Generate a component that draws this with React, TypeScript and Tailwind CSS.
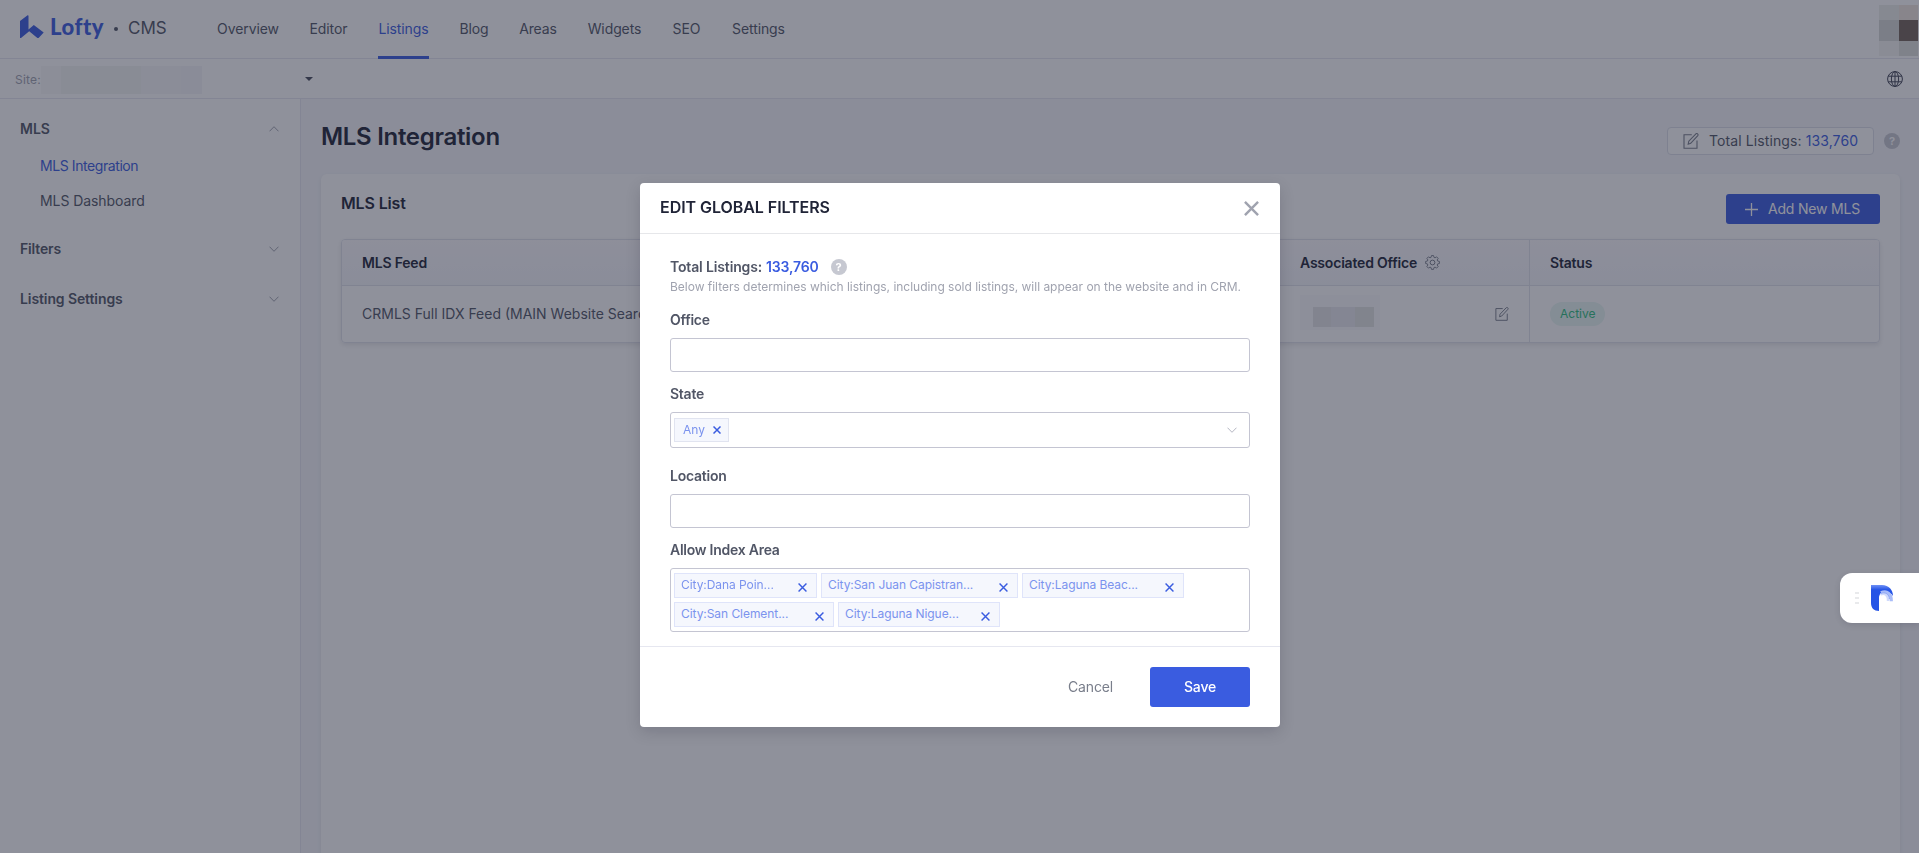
import React from "react";

const navItems = [
  { label: "Overview", width: "w-[62px]" },
  { label: "Editor", width: "w-[39px]" },
  { label: "Listings", width: "w-[51px]", active: true },
  { label: "Blog", width: "w-[30px]" },
  { label: "Areas", width: "w-[38px]" },
  { label: "Widgets", width: "w-[55px]" },
  { label: "SEO", width: "w-[29px]" },
  { label: "Settings", width: "w-[55px]" },
];

const areaTags = [
  { label: "City:Dana Poin...", width: "w-[143px]" },
  { label: "City:San Juan Capistran...", width: "w-[197px]" },
  { label: "City:Laguna Beac...", width: "w-[162px]" },
  { label: "City:San Clement...", width: "w-[160px]" },
  { label: "City:Laguna Nigue...", width: "w-[162px]" },
];

const LoftyLogo = () => (
  <svg width="24" height="24" viewBox="0 0 24 24" fill="#3a5ce0">
    <path d="M0 6 7.6.3Q8.500 0 8.500 1v13.600l5.300-4.500 9.900 7.400L18.600 23h-1.200L9.200 16.300 1 22.900H0Z" />
  </svg>
);

const Chevron = ({ up = false, color = "#a0a3af" }) => (
  <svg width="10" height="6" viewBox="0 0 10 6" fill="none" stroke={color} strokeWidth="1">
    <path d={up ? "M.5 5.3 5 .7l4.5 4.6" : "M.5.7 5 5.3 9.5.7"} />
  </svg>
);

const EditIcon = ({ size = 16 }) => (
  <svg width={size} height={size} viewBox="0 0 16 16" fill="none" stroke="#797e8b" strokeWidth="1.1">
    <path d="M8.8 1.8H1v13.4h13V7.6" />
    <path d="m5.2 11.2.6-3L12.9.8q.9-.6 1.7.1.8.8.2 1.7l-7.1 7.7Z" />
  </svg>
);

const GlobeIcon = () => (
  <svg width="16" height="16" viewBox="0 0 16 16" fill="none" stroke="#3f4354" strokeWidth="1">
    <circle cx="8" cy="8" r="7.4" />
    <ellipse cx="8" cy="8" rx="3.6" ry="7.4" />
    <path d="M8 .6v14.8M1.2 5.2h13.6M1.2 10.8h13.6" />
  </svg>
);

const GearIcon = () => (
  <svg width="15" height="15" viewBox="0 0 24 24" fill="none" stroke="#797e8b" strokeWidth="1.6" strokeLinejoin="round">
    <path d="M10.2 1h3.600l.7 3.100 1.900.8 2.700-1.700 2.700 2.700-1.700 2.700.8 1.900 3.100.7v3.600l-3.100.7-.8 1.900 1.700 2.700-2.700 2.700-2.700-1.700-1.900.8-.7 3.100h-3.600l-.7-3.100-1.900-.8-2.700 1.700-2.700-2.700 1.700-2.700-.8-1.900L0 14.800v-3.600l3.100-.7.8-1.900-1.700-2.700 2.700-2.700 2.700 1.700 1.900-.8Z" transform="translate(1 0) scale(.92)" />
    <circle cx="12" cy="12" r="3.800" />
  </svg>
);

const QuestionIcon = () => (
  <span className="flex size-4 items-center justify-center rounded-full bg-[#c6c8d1] text-[11px] font-bold leading-none tracking-normal text-white">?</span>
);

const Cross = ({ size = 8, color = "#3a5ce0", weight = 1.5 }) => (
  <svg width={size} height={size} viewBox="0 0 8 8" fill="none" stroke={color} strokeWidth={weight}>
    <path d="m.5.5 7 7m0-7-7 7" />
  </svg>
);

const TopBar = () => (
  <header className="flex h-[59px] items-stretch justify-between border-b border-[#e6e7f0] bg-white">
    <div className="flex">
      <div className="flex w-[217px] items-center pl-5">
        <div className="-mt-[5px]">
          <LoftyLogo />
        </div>
        <span className="ml-[6px] -mt-[5px] w-[54px] font-[Lato] text-[22px] font-black leading-none tracking-[0.5px] text-[#3a5ce0]">
          Lofty
        </span>
        <span className="ml-[10px] size-1 rounded-full bg-[#515666]" />
        <span className="ml-[10px] text-[17px] text-[#515666]">CMS</span>
      </div>
      <nav className="flex gap-[30px]">
        {navItems.map((item) => (
          <a
            key={item.label}
            className={`${item.width} flex items-center justify-center whitespace-nowrap text-sm tracking-[-0.1px] ${
              item.active ? "-mb-px border-b-3 border-[#3a5ce0] pt-px text-[#3a5ce0]" : "text-[#515666]"
            }`}
          >
            {item.label}
          </a>
        ))}
      </nav>
    </div>
    <div className="mt-[5px] mr-px grid h-[51px] w-[39px] grid-cols-2 grid-rows-[15px_21px_15px]">
      <i className="bg-[#ecefeb]" />
      <i className="bg-[#f0e7df]" />
      <i className="bg-[#d6d9d7]" />
      <i className="bg-[#74645b]" />
      <i className="bg-[#f4f5f2]" />
      <i className="bg-[#dfe1dc]" />
    </div>
  </header>
);

const SiteBar = () => (
  <div className="flex h-10 items-center border-b border-[#e6e7f0] bg-white pl-[15px] pr-4">
    <span className="mt-[2px] w-[26px] text-xs tracking-[0.2px] text-[#a0a3af]">Site:</span>
    <div className="mt-[2px] flex h-7 w-[180px]">
      <i className="w-5 bg-[#f9f9f9]" />
      <i className="w-20 bg-[#f3f4f3]" />
      <i className="w-10 bg-[#f7f7f8]" />
      <i className="w-[21px] bg-[#f4f4f9]" />
    </div>
    <span className="ml-[84px] border-x-4 border-t-4 border-x-transparent border-t-[#484c5c]" />
    <span className="ml-auto">
      <GlobeIcon />
    </span>
  </div>
);

const Sidebar = () => (
  <aside className="w-[301px] shrink-0 border-r border-[#e6e7f0] bg-white pl-5 pr-[21px] pt-5 text-sm text-[#515666]">
    <div className="flex h-5 items-center justify-between font-semibold">
      MLS <Chevron up />
    </div>
    <div className="mt-[17px] pl-5 leading-5 tracking-[-0.42px] text-[#3a5ce0]">MLS Integration</div>
    <div className="mt-[15px] pl-5 leading-5 tracking-[-0.08px]">MLS Dashboard</div>
    <div className="mt-7 flex h-5 items-center justify-between font-semibold tracking-[-0.15px]">
      Filters <Chevron />
    </div>
    <div className="mt-[30px] flex h-5 items-center justify-between font-semibold tracking-[-0.1px]">
      Listing Settings <Chevron />
    </div>
  </aside>
);

const MlsTable = () => (
  <div className="mt-[15px] overflow-hidden rounded border border-[#e1e2eb] text-sm shadow-[0_2px_5px_rgba(0,10,30,0.1)]">
    <div className="flex h-[46px] items-center border-b border-[#e1e2eb] bg-linear-to-b from-[#fcfafd] to-[#f5f6fb] font-semibold tracking-[-0.2px] text-[#202437]">
      <div className="w-[938px] pl-5">MLS Feed</div>
      <div className="flex w-[250px] items-center gap-2 self-stretch border-r border-[#e1e2eb] pl-5">
        Associated Office <GearIcon />
      </div>
      <div className="pl-5">Status</div>
    </div>
    <div className="flex h-14 items-center text-[#515666]">
      <div className="w-[938px] pl-5">CRMLS Full IDX Feed (MAIN Website Search)</div>
      <div className="flex w-[250px] items-center justify-between self-stretch border-r border-[#e1e2eb] pl-5 pr-5">
        <div className="-mt-1 flex h-[35px] w-20 items-end bg-[#fafafc] pb-[3px] pl-[13px]">
          <i className="h-5 w-[18px] bg-[#e5e5e6]" />
          <i className="h-5 w-6 bg-[#e8e8ee]" />
          <i className="h-5 w-[19px] bg-[#e3e4e3]" />
        </div>
        <EditIcon size={14} />
      </div>
      <div className="ml-5 rounded-full bg-[#e8f6f2] px-[10px] text-xs leading-6 text-[#2fbf7f]">Active</div>
    </div>
  </div>
);

const MainContent = () => (
  <main className="flex flex-1 flex-col bg-[#f6f7fb] pl-5 pr-[19px]">
    <div className="flex h-[75px] items-center justify-between">
      <h1 className="text-2xl font-semibold tracking-[-0.3px] text-[#202437]">MLS Integration</h1>
      <div className="mt-[9px] flex items-center gap-[10px]">
        <div className="flex h-7 w-[207px] items-center rounded border border-[#dddfe8] bg-white pl-[15px] text-sm tracking-[0.1px] text-[#515666]">
          <EditIcon />
          <span className="ml-[10px] whitespace-nowrap">
            Total Listings: <span className="text-[#3a5ce0]">133,760</span>
          </span>
        </div>
        <QuestionIcon />
      </div>
    </div>
    <section className="flex-1 rounded-t-md bg-white px-5 pt-5 shadow-[0_2px_5px_rgba(0,10,30,0.08)]">
      <div className="flex items-start justify-between">
        <h2 className="-mt-[3px] text-base font-semibold tracking-[-0.15px] text-[#202437]">MLS List</h2>
        <button className="flex h-[30px] w-[154px] items-center rounded-[3px] bg-[#3a5ce0] pl-[19px] text-sm tracking-[-0.2px] text-white">
          <svg width="13" height="13" viewBox="0 0 13 13" stroke="white" strokeWidth="1.3">
            <path d="M6.5 0v13M0 6.5h13" />
          </svg>
          <span className="ml-[10px]">Add New MLS</span>
        </button>
      </div>
      <MlsTable />
    </section>
  </main>
);

const FieldLabel = ({ children }: { children: React.ReactNode }) => (
  <div className="text-sm font-semibold leading-5 tracking-[-0.25px] text-[#515666]">{children}</div>
);

const FilterDialog = () => (
  <div className="h-[544px] w-[640px] rounded bg-white shadow-[0_5px_15px_rgba(0,10,30,0.15)]">
    <div className="flex h-[51px] items-center justify-between border-b border-[#e6e7ea] px-5">
      <h3 className="-mt-[2px] text-base font-semibold tracking-[-0.05px] text-[#202437]">EDIT GLOBAL FILTERS</h3>
      <span className="mt-px mr-px">
        <Cross size={15} color="#a0a3af" weight={1.3} />
      </span>
    </div>

    <div className="h-[413px] border-b border-[#e6e7f0] px-[30px] pt-[23px]">
      <div className="flex h-5 items-center text-sm font-semibold tracking-[-0.15px] text-[#515666]">
        Total Listings: <span className="ml-1 mr-3 text-[#3a5ce0]">133,760</span>
        <QuestionIcon />
      </div>
      <p className="whitespace-nowrap text-xs leading-5 tracking-[-0.02px] text-[#a0a3af]">
        Below filters determines which listings, including sold listings, will appear on the website and in CRM.
      </p>

      <div className="mt-[13px]">
        <FieldLabel>Office</FieldLabel>
        <div className="mt-2 h-[34px] rounded-[3px] border border-[#c4c5d2]" />
      </div>

      <div className="mt-3">
        <FieldLabel>State</FieldLabel>
        <div className="mt-2 flex h-9 items-center justify-between rounded-[3px] border border-[#c4c5d2] pl-[3px] pr-3">
          <span className="flex h-6 w-[55px] items-center gap-2 border border-[#e1e4f0] bg-[#f5f7fd] pl-2 text-xs text-[#7b93ee]">
            Any <Cross />
          </span>
          <Chevron color="#b4b6c2" />
        </div>
      </div>

      <div className="mt-[18px]">
        <FieldLabel>Location</FieldLabel>
        <div className="mt-2 h-[34px] rounded-[3px] border border-[#c4c5d2]" />
      </div>

      <div className="mt-3">
        <FieldLabel>Allow Index Area</FieldLabel>
        <div className="mt-2 flex h-16 flex-wrap content-start gap-1 rounded-[3px] border border-[#c4c5d2] py-1 pl-[3px] pr-8">
          {areaTags.map((tag) => (
            <span
              key={tag.label}
              className={`${tag.width} flex h-[25px] items-center justify-between whitespace-nowrap border border-[#dfe4fa] bg-[#f5f7fd] pl-[6px] pr-[9px] text-xs tracking-[-0.06px] text-[#7b93ee]`}
            >
              <span className="-mt-px">{tag.label}</span>
              <span className="mt-[3px]">
                <Cross size={9} weight={1.3} />
              </span>
            </span>
          ))}
        </div>
      </div>
    </div>

    <div className="flex h-20 items-center justify-end pr-[30px] text-sm">
      <button className="mr-[37px] tracking-[-0.15px] text-[#797e8b]">Cancel</button>
      <button className="h-10 w-[100px] rounded-[3px] bg-[#3a5ce0] font-medium tracking-[-0.15px] text-white">Save</button>
    </div>
  </div>
);

const FloatingWidget = () => (
  <div className="fixed right-0 top-[573px] flex h-[50px] w-[79px] items-center rounded-l-xl bg-white pl-[15px] shadow-[0_2px_6px_rgba(0,10,30,0.12)]">
    <div className="flex flex-col gap-[3px]">
      <i className="h-[2px] w-1 bg-[#e9eaec]" />
      <i className="h-[2px] w-1 bg-[#e9eaec]" />
      <i className="h-[2px] w-1 bg-[#e9eaec]" />
    </div>
    <svg className="ml-3" width="22" height="26" viewBox="0 0 22 26" fill="none">
      <defs>
        <linearGradient id="widget" x1="11" y1="0" x2="11" y2="8" gradientUnits="userSpaceOnUse">
          <stop stopColor="#6f90f5" />
          <stop offset=".6" stopColor="#2554e6" />
        </linearGradient>
      </defs>
      <path d="M0 0h11c7 0 11 5 11 11v1H8v14c-5 0-8-3-8-8Z" fill="url(#widget)" />
      <path d="M8 26V13c0-4 2.500-6 6-6 4 0 7 2 8 4v6H8Z" fill="white" />
      <path d="M10 7.800c6-3 10.500 1.200 10.300 8.400" stroke="#a9bcf8" strokeWidth="3.200" />
      <path d="M9.500 9.500c4.500-2 7.800 1 7.500 6.500" stroke="#d0dafc" strokeWidth="2.400" />
      <path d="M9.500 8.700c4.500-2.400 8.800.6 8.900 5.300" stroke="#7d9af4" strokeWidth=".8" />
    </svg>
  </div>
);

const App = () => {
  return (
    <div className="flex h-screen flex-col overflow-hidden font-[Inter,sans-serif]">
      <TopBar />
      <SiteBar />
      <div className="flex flex-1">
        <Sidebar />
        <MainContent />
      </div>
      <div className="fixed inset-0 flex items-start justify-center bg-[#202437]/50 pl-px pt-[183px]">
        <FilterDialog />
      </div>
      <FloatingWidget />
    </div>
  );
};

export default App;
